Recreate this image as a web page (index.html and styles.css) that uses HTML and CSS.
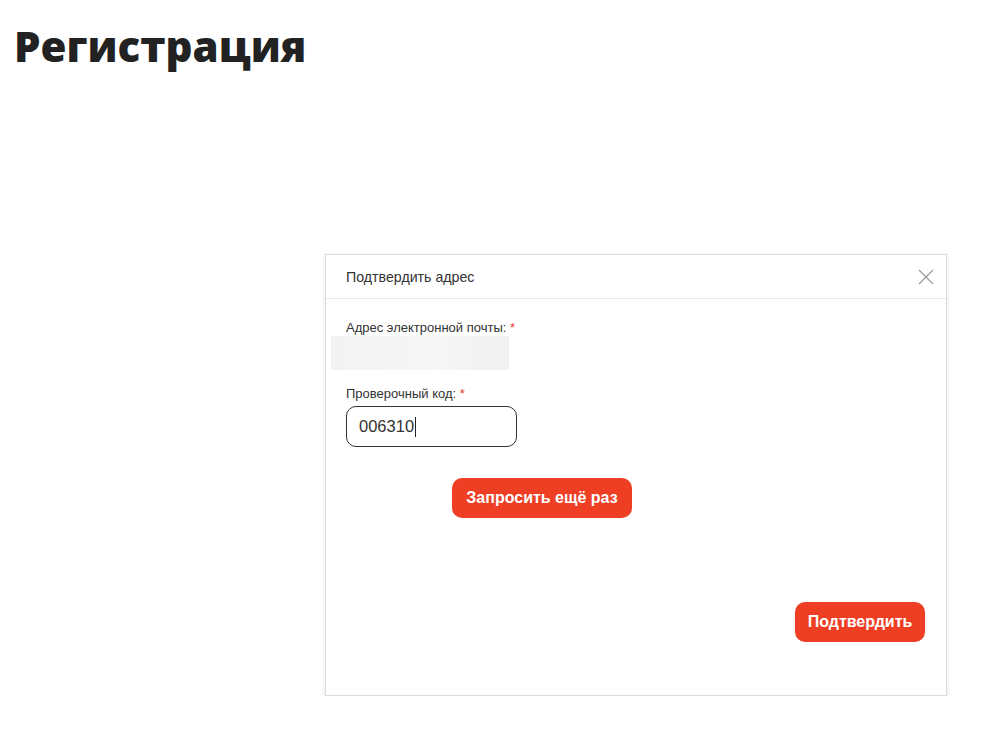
FILE: index.html
```html
<!DOCTYPE html>
<html lang="ru">
<head>
  <meta charset="UTF-8" />
  <meta name="viewport" content="width=device-width, initial-scale=1.0" />
  <title>Регистрация</title>
  <link rel="stylesheet" href="styles.css">
</head>
<body>
  <div class="page">
    <h1 class="page-title">Регистрация</h1>

    <div class="dialog">
      <div class="dialog-header">
        <span class="dialog-title">Подтвердить адрес</span>
        <button class="dialog-close" aria-label="Закрыть">
          <svg width="16" height="16" viewBox="0 0 16 16">
            <path d="M1 1 L15 15 M15 1 L1 15" stroke="#9a9a9a" stroke-width="1.2" fill="none" />
          </svg>
        </button>
      </div>

      <div class="dialog-body">
        <label class="field-label">Адрес электронной почты: <span class="req">*</span></label>
        <div class="email-blur"></div>

        <label class="field-label second">Проверочный код: <span class="req">*</span></label>
        <div class="code-input">006310<span class="caret"></span></div>

        <button class="btn btn-resend">Запросить ещё раз</button>

        <div class="dialog-footer">
          <button class="btn">Подтвердить</button>
        </div>
      </div>
    </div>
  </div>
</body>
</html>
```

FILE: styles.css
```css
* {
  margin: 0;
  padding: 0;
  box-sizing: border-box;
}

body {
  font-family: 'Liberation Sans', Arial, sans-serif;
  background: #ffffff;
  color: #333333;
}

.page {
  padding: 21px 15px 0;
}

.page-title {
  font-family: 'Open Sans', sans-serif;
  font-weight: 800;
  font-size: 42px;
  line-height: 50px;
  color: #222222;
  margin-left: -1px;
}

.dialog {
  width: 622px;
  margin: 183px 0 0 310px;
  border: 1px solid #dcdcdc;
  box-shadow: 0 1px 4px rgba(0, 0, 0, 0.12);
  background: #ffffff;
}

.dialog-header {
  height: 44px;
  border-bottom: 1px solid #e8e8e8;
  padding: 0 10px 0 20px;
  display: flex;
  align-items: center;
  justify-content: space-between;
}

.dialog-title {
  font-size: 14.2px;
  color: #333333;
}

.dialog-close {
  border: none;
  background: none;
  width: 20px;
  height: 20px;
  display: flex;
  align-items: center;
  justify-content: center;
  cursor: pointer;
}

.dialog-body {
  padding: 21px 21px 53px 20px;
  display: flex;
  flex-direction: column;
  align-items: flex-start;
}

.field-label {
  font-size: 13px;
  line-height: 16px;
  color: #333333;
}

.field-label.second {
  margin-top: 16px;
}

.req {
  color: #e8392a;
}

.email-blur {
  width: 178px;
  height: 34px;
  margin-left: -15px;
  background: linear-gradient(90deg, #f3f3f3, #f6f6f6 60%, #f1f1f1);
}

.code-input {
  margin-top: 4px;
  width: 171px;
  height: 41px;
  border: 1.5px solid #333333;
  border-radius: 10px;
  padding: 0 12px;
  font-size: 16.5px;
  color: #333333;
  display: flex;
  align-items: center;
}

.caret {
  display: inline-block;
  width: 1px;
  height: 20px;
  margin-left: 1px;
  background: #222222;
}

.btn {
  height: 40px;
  padding: 0 12px;
  border: none;
  border-radius: 10px;
  background: #ee3e24;
  color: #ffffff;
  font-family: 'Liberation Sans', Arial, sans-serif;
  font-weight: bold;
  font-size: 16px;
  cursor: pointer;
}

.btn-resend {
  margin: 31px 0 0 106px;
  width: 180px;
}

.dialog-footer {
  margin-top: 84px;
  width: 100%;
  display: flex;
  justify-content: flex-end;
}

.dialog-footer .btn {
  width: 130px;
}
```
